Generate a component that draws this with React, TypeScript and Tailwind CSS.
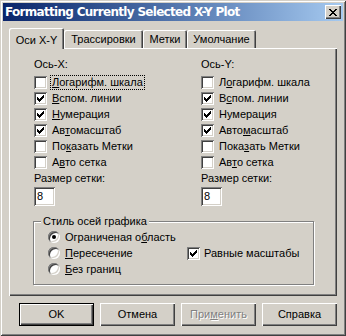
import React from 'react';

const sunken = 'shadow-[inset_1px_1px_0_#808080,inset_-1px_-1px_0_#ffffff,inset_2px_2px_0_#404040,inset_-2px_-2px_0_#d4d0c8]';
const raised = 'shadow-[inset_1px_1px_0_#ffffff,inset_-1px_-1px_0_#404040,inset_-2px_-2px_0_#808080]';

function Mark() {
  return (
    <svg width="7" height="7" viewBox="0 0 7 7" className="absolute left-[3px] top-[3px]" shapeRendering="crispEdges">
      <path d="M0 2h1v3H0z M1 3h1v3H1z M2 4h1v3H2z M3 3h1v3H3z M4 2h1v3H4z M5 1h1v3H5z M6 0h1v3H6z" fill="#000" />
    </svg>
  );
}

function Check({ checked }: { checked?: boolean }) {
  return (
    <span className={`relative inline-block w-[13px] h-[13px] shrink-0 bg-white ${sunken}`}>
      {checked && <Mark />}
    </span>
  );
}

function Radio({ checked }: { checked?: boolean }) {
  return (
    <span className={`relative inline-block w-[12px] h-[12px] shrink-0 rounded-full bg-white ${sunken}`}>
      {checked && <span className="absolute left-[4px] top-[4px] w-[4px] h-[4px] rounded-full bg-black" />}
    </span>
  );
}

// label with one underlined mnemonic letter
function L({ t, u, focus }: { t: string; u: number; focus?: boolean }) {
  return (
    <span className={`px-[1px] leading-[13px] ${focus ? 'outline outline-1 outline-dotted outline-black' : ''}`}>
      {u >= 0 ? <>{t.slice(0, u)}<span className="underline underline-offset-[1px]">{t[u]}</span>{t.slice(u + 1)}</> : t}
    </span>
  );
}

type Row = { t: string; u: number; on: boolean; focus?: boolean };

function AxisCol({ title, rows }: { title: string; rows: Row[] }) {
  return (
    <div className="flex flex-col">
      <div className="h-[16px] flex items-center">{title}</div>
      <div className="mt-[2px] flex flex-col">
        {rows.map((r, i) => (
          <div key={i} className="h-[16px] flex items-center gap-[4px]">
            <Check checked={r.on} />
            <L t={r.t} u={r.u} focus={r.focus} />
          </div>
        ))}
      </div>
      <div className="h-[16px] flex items-center">Размер сетки:</div>
      <div className={`mt-[1px] w-[21px] h-[19px] bg-white pl-[3px] flex items-center ${sunken}`}>8</div>
    </div>
  );
}

const leftRows: Row[] = [
  { t: 'Логарифм. шкала', u: 0, on: false, focus: true },
  { t: 'Вспом. линии', u: 0, on: true },
  { t: 'Нумерация', u: 0, on: true },
  { t: 'Автомасштаб', u: 2, on: true },
  { t: 'Показать Метки', u: 2, on: false },
  { t: 'Авто сетка', u: 1, on: false },
];
const rightRows: Row[] = [
  { t: 'Логарифм. шкала', u: 1, on: false },
  { t: 'Вспом. линии', u: 1, on: true },
  { t: 'Нумерация', u: -1, on: true },
  { t: 'Автомасштаб', u: 4, on: true },
  { t: 'Показать Метки', u: 4, on: false },
  { t: 'Авто сетка', u: 2, on: false },
];

function Btn({ children, def, disabled }: { children: React.ReactNode; def?: boolean; disabled?: boolean }) {
  return (
    <div className={`w-[75px] h-[23px] flex items-center justify-center ${def ? 'border border-black' : ''} ${raised} ${disabled ? 'text-[#808080] [text-shadow:1px_1px_0_#fff]' : ''}`}>
      {children}
    </div>
  );
}

export default function App() {
  return (
    <div className="w-[346px] h-[336px] bg-[#d4d0c8] p-[3px] text-[11px] text-black [font-family:'Liberation_Sans',Arial,sans-serif] shadow-[inset_1px_1px_0_#d4d0c8,inset_-1px_-1px_0_#404040,inset_2px_2px_0_#ffffff,inset_-2px_-2px_0_#808080]">
      {/* title bar */}
      <div className="h-[18px] flex items-center bg-gradient-to-r from-[#0a246a] to-[#a6caf0] pl-[2px] pr-[2px]">
        <span className="flex-1 text-white font-bold text-[12px] [font-family:'DejaVu_Sans',sans-serif] tracking-[-0.7px]">Formatting Currently Selected X-Y Plot</span>
        <div className={`w-[16px] h-[14px] bg-[#d4d0c8] flex items-center justify-center ${raised}`}>
          <svg width="8" height="7" viewBox="0 0 8 7" shapeRendering="crispEdges">
            <path d="M0 0h2v1H0z M1 1h2v1H1z M2 2h4v1H2z M3 3h2v1H3z M2 4h4v1H2z M1 5h2v1H1z M0 6h2v1H0z M6 0h2v1H6z M5 1h2v1H5z M5 5h2v1H5z M6 6h2v1H6z" fill="#000" />
          </svg>
        </div>
      </div>

      {/* tabs */}
      <div className="mt-[7px] px-[6px] flex items-end h-[20px]">
        <div className="relative z-10 w-[55px] h-[21px] -mb-[1px] bg-[#d4d0c8] flex items-start justify-center pt-[4px] rounded-t-[2px] shadow-[inset_1px_1px_0_#ffffff,inset_-1px_0_0_#404040,inset_-2px_0_0_#808080]">Оси X-Y</div>
        <div className="w-[79px] h-[18px] flex items-center justify-center rounded-t-[2px] shadow-[inset_1px_1px_0_#ffffff,inset_-1px_0_0_#404040,inset_-2px_0_0_#808080]">Трассировки</div>
        <div className="w-[44px] h-[18px] flex items-center justify-center rounded-t-[2px] shadow-[inset_1px_1px_0_#ffffff,inset_-1px_0_0_#404040,inset_-2px_0_0_#808080]">Метки</div>
        <div className="w-[69px] h-[18px] flex items-center justify-center rounded-t-[2px] shadow-[inset_1px_1px_0_#ffffff,inset_-1px_0_0_#404040,inset_-2px_0_0_#808080]">Умолчание</div>
      </div>

      {/* panel */}
      <div className="mx-[6px]">
        <div className={`h-[248px] pl-[25px] pt-[8px] ${raised}`}>
          <div className="grid grid-cols-[167px_1fr]">
            <AxisCol title="Ось-X:" rows={leftRows} />
            <AxisCol title="Ось-Y:" rows={rightRows} />
          </div>

          <div className="relative -ml-[1px] mt-[15px] w-[281px] h-[64px] border border-[#808080] shadow-[1px_1px_0_#ffffff,inset_1px_1px_0_#ffffff]">
            <span className="absolute left-[7px] -top-[8px] px-[2px] bg-[#d4d0c8] leading-[14px]">Стиль осей графика</span>
            <div className="pt-[7px] pl-[14px] flex">
              <div className="flex flex-col w-[139px]">
                <div className="h-[16px] flex items-center gap-[4px]"><Radio checked /><L t="Ограниченая область" u={13} /></div>
                <div className="h-[16px] flex items-center gap-[4px]"><Radio /><L t="Пересечение" u={0} /></div>
                <div className="h-[16px] flex items-center gap-[4px]"><Radio /><L t="Без границ" u={0} /></div>
              </div>
              <div className="flex flex-col pt-[16px]">
                <div className="h-[16px] flex items-center gap-[4px]"><Check checked /><span>Равные масштабы</span></div>
              </div>
            </div>
          </div>
        </div>
      </div>

      {/* buttons */}
      <div className="mt-[7px] pl-[16px] flex gap-[6px]">
        <Btn def>OK</Btn>
        <Btn>Отмена</Btn>
        <Btn disabled>При<span className="underline">м</span>енить</Btn>
        <Btn>Справка</Btn>
      </div>
    </div>
  );
}
